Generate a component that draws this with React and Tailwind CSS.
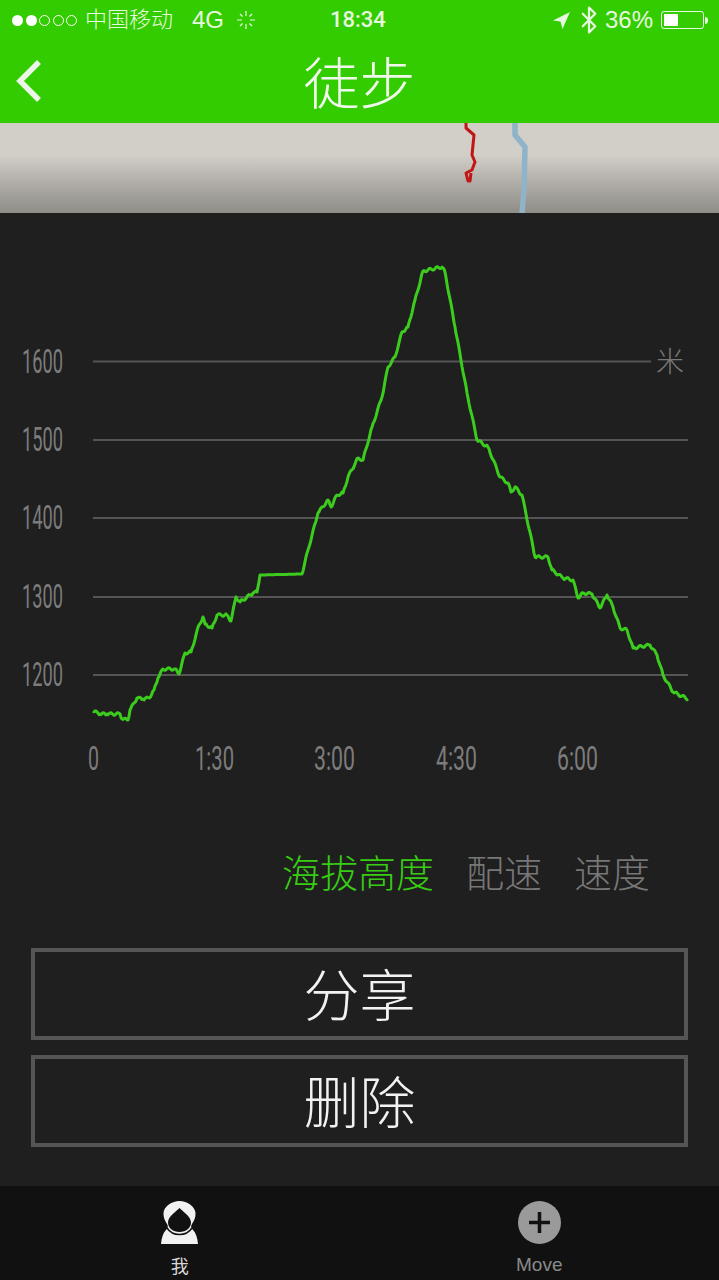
import React from "react";
import { Bluetooth } from "lucide-react";

const cjk = "font-['Noto_Sans_CJK_SC',sans-serif]";

// elevation line, traced from the picture; flat parts stay clean, the rest gets a small wobble
const trace = [
  [93, 711], [100, 714], [107, 714], [120, 714], [122, 719], [128, 720], [130, 710], [137, 698],
  [143, 699], [149, 698], [154, 690], [158, 678], [163, 669], [175, 669], [179, 674], [185, 653],
  [191, 652], [199, 625], [203, 617], [205, 624], [212, 628], [217, 615], [227, 615], [231, 621],
  [236, 597], [240, 602], [253, 593], [257, 592], [260, 575], [302, 574], [308, 550], [317, 517],
  [318, 513], [328, 500], [331, 507], [337, 495], [343, 493], [348, 477], [358, 458], [363, 460],
  [372, 427], [382, 397], [388, 367], [395, 357], [402, 332], [408, 327], [415, 300], [423, 271],
  [442, 267], [445, 272], [455, 327], [467, 393], [477, 440], [488, 447], [500, 477], [508, 483],
  [511, 492], [515, 487], [522, 495], [533, 547], [535, 557], [548, 557], [552, 570], [563, 578],
  [573, 580], [578, 598], [583, 593], [592, 594], [600, 608], [607, 595], [613, 607], [620, 628],
  [627, 630], [633, 648], [650, 645], [657, 655], [663, 675], [673, 692], [688, 699],
];

const linePoints = trace
  .flatMap(([x, y], i) => {
    if (i === 0) return [`${x},${y}`];
    const [px, py] = trace[i - 1];
    const steps = Math.max(1, Math.round(Math.abs(x - px)));
    const flat = px === 260;
    const out = [];
    for (let s = 1; s <= steps; s++) {
      const nx = px + ((x - px) * s) / steps;
      const ny = py + ((y - py) * s) / steps;
      const wob = s === steps || flat ? 0 : Math.sin(nx * 11.7) * 1.3;
      out.push(`${nx.toFixed(1)},${(ny + wob).toFixed(1)}`);
    }
    return out;
  })
  .join(" ");

const yLabels = [
  { t: "1600", line: 361.5, base: 373, end: 651 },
  { t: "1500", line: 440, base: 451, end: 688 },
  { t: "1400", line: 518, base: 529, end: 688 },
  { t: "1300", line: 597, base: 608, end: 688 },
  { t: "1200", line: 675, base: 686, end: 688 },
];

const xLabels = [
  { t: "0", x: 88, w: 11 },
  { t: "1:30", x: 195, w: 39 },
  { t: "3:00", x: 314, w: 41 },
  { t: "4:30", x: 436, w: 41 },
  { t: "6:00", x: 557, w: 41 },
];

const StatusBar = () => (
  <div className="relative flex h-10 items-center text-[#e6f8df] font-['Liberation_Sans','Noto_Sans_CJK_SC',sans-serif]">
    <div className="ml-3 flex gap-[2.5px]">
      <span className="h-[11px] w-[11px] rounded-full bg-white" />
      <span className="h-[11px] w-[11px] rounded-full bg-white" />
      <span className="h-[11px] w-[11px] rounded-full border border-white" />
      <span className="h-[11px] w-[11px] rounded-full border border-white" />
      <span className="h-[11px] w-[11px] rounded-full border border-white" />
    </div>
    <span className="ml-2 text-[22px] font-light leading-none">中国移动</span>
    <span className="ml-[19px] text-[24px] leading-none">4G</span>
    <svg className="ml-[12px]" width="20" height="20" viewBox="0 0 20 20" stroke="#e6f8df" strokeWidth="1.2">
      <path d="M10 1v5M10 14v5M1 10h5M14 10h5M4 4l2.500 2.500M13.500 13.500L16 16M16 4l-2.500 2.500M6.500 13.500L4 16" />
    </svg>
    <span className="absolute left-[330px] top-[9px] font-['Roboto',sans-serif] text-[22px] font-medium leading-[22px]">18:34</span>
    <div className="ml-auto mr-[11px] flex items-center">
      <svg width="17" height="17" viewBox="0 0 17 17" fill="#e6f8df">
        <path d="M17 0L0 8.500l7.500 1 2 7.500z" />
      </svg>
      <Bluetooth className="ml-[4px] -mr-[4px]" size={30} strokeWidth={1.8} />
      <span className="ml-[5px] text-[24px] font-light leading-none">36%</span>
      <div className="ml-[8px] flex items-center">
        <div className="h-[18px] w-[43px] rounded-[3px] border border-[#e6f8df] p-[2px]">
          <div className="h-full w-[14px] bg-white" />
        </div>
        <div className="ml-px h-[7px] w-[3px] rounded-r-sm bg-[#e6f8df]" />
      </div>
    </div>
  </div>
);

const NavBar = () => (
  <div className="relative flex h-[83px] items-center justify-center">
    <svg className="absolute left-[13px] top-[19px]" width="32" height="44" viewBox="0 0 32 44" fill="none" stroke="#edf5e8" strokeWidth="5.500">
      <path d="M26 3L7 22l19 19" />
    </svg>
    <span className={`${cjk} pb-1 text-[56px] font-light leading-none text-[#f0f8ec]`}>徒步</span>
  </div>
);

const MapStrip = () => (
  <div className="h-[90px] bg-gradient-to-b from-[#d2cec8] from-35% to-[#8f8d88]">
    <svg className="block" width="719" height="90" viewBox="0 0 719 90" fill="none">
      <path d="M515 0v12l10 12-1 43-2 23" stroke="#8fb3c9" strokeWidth="5.500" strokeLinejoin="round" />
      <path d="M466 0v5l8 7-2 20 3 7-3 8-6 3 2 8 2 0 1-8" stroke="#c01616" strokeWidth="3" strokeLinejoin="round" />
    </svg>
  </div>
);

const Chart = () => (
  <svg className="block h-[627px] w-full" viewBox="0 213 719 627" fill="none">
    {yLabels.map((l) => (
      <g key={l.t}>
        <line x1="93" x2={l.end} y1={l.line} y2={l.line} stroke="#555555" strokeWidth="2" />
        <text
          x="22"
          y={l.base}
          textLength="41"
          lengthAdjust="spacingAndGlyphs"
          fill="#7c7c7c"
          className="font-['Roboto',sans-serif] text-[33px] font-normal"
        >
          {l.t}
        </text>
      </g>
    ))}
    <text x="656" y="372" fill="#777777" className={`${cjk} text-[28px] font-light`}>
      米
    </text>
    {xLabels.map((l) => (
      <text
        key={l.t}
        x={l.x}
        y="770"
        textLength={l.w}
        lengthAdjust="spacingAndGlyphs"
        fill="#7c7c7c"
        className="font-['Roboto',sans-serif] text-[33px] font-normal"
      >
        {l.t}
      </text>
    ))}
    <polyline points={linePoints} stroke="#3ccc1e" strokeWidth="3" strokeLinejoin="round" />
  </svg>
);

const Tabs = () => (
  <div className={`${cjk} flex justify-end pr-[69px] pt-[11px] text-[38px] font-light leading-10 text-[#777777]`}>
    <span className="text-[#38cc14]">海拔高度</span>
    <span className="ml-8">配速</span>
    <span className="ml-8">速度</span>
  </div>
);

const ActionButton = ({ children }) => (
  <button className={`${cjk} flex h-[92px] w-full items-center justify-center border-4 border-[#555555] pb-[5px] text-[56px] font-light leading-none text-[#f2f2f2]`}>
    {children}
  </button>
);

const BottomBar = () => (
  <div className="mt-auto grid h-[94px] grid-cols-2 bg-[#111111]">
    <div className="flex flex-col items-center pt-[15px]">
      <svg width="37" height="43" viewBox="0 0 37 43">
        <path d="M18.500 0C11 0 3 5 2.500 12c-.3 4 1.500 8 3.500 11 1.500 2.500 1 4-1 6-3 3-4.500 8-5 14h37c-.5-6-2-11-5-14-2-2-2.500-3.500-1-6 2-3 3.800-7 3.500-11C34 5 26 0 18.500 0z" fill="#f2f2f2" />
        <path d="M18.500 7c-3 3.500-11.500 8-11.500 14.500C7 27 12 31 18.500 31S30 27 30 21.500C30 15 21.500 10.500 18.500 7z" fill="#111111" />
        <path d="M6 27c3 4.500 7.500 6.500 12.500 6.500S28 31.500 31 27" fill="none" stroke="#111111" strokeWidth="1.500" />
      </svg>
      <span className={`${cjk} mt-[9px] text-[18px] leading-[24px] text-[#d8d8d8]`}>我</span>
    </div>
    <div className="flex flex-col items-center pt-[15px]">
      <svg width="43" height="43" viewBox="0 0 43 43">
        <circle cx="21.500" cy="21.500" r="21.500" fill="#9a9a9a" />
        <path d="M21.500 11v21M11 21.500h21" stroke="#111111" strokeWidth="3.500" />
      </svg>
      <span className="mt-[9px] font-['Liberation_Sans',sans-serif] text-[19px] leading-[24px] text-[#8a8a8a]">Move</span>
    </div>
  </div>
);

export default function App() {
  return (
    <div className="flex h-[1280px] w-[719px] flex-col overflow-hidden bg-[#1f1f1f]">
      <div className="bg-[#33cc00]">
        <StatusBar />
        <NavBar />
      </div>
      <MapStrip />
      <Chart />
      <Tabs />
      <div className="mx-[31px] mt-[57px] flex flex-col gap-[15px]">
        <ActionButton>分享</ActionButton>
        <ActionButton>删除</ActionButton>
      </div>
      <BottomBar />
    </div>
  );
}
